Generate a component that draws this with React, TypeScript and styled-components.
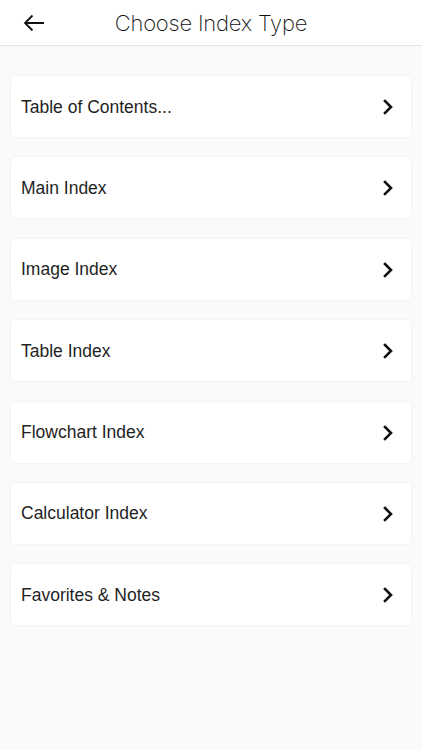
import React from "react";
import styled, { createGlobalStyle } from "styled-components";

const GlobalStyle = createGlobalStyle`
  html, body {
    margin: 0;
    padding: 0;
    background: #f9fafc;
  }
  body {
    font-family: "Liberation Sans", Arial, sans-serif;
  }
  * {
    box-sizing: border-box;
  }
`;

const Page = styled.div`
  width: 422px;
  min-height: 750px;
  background: #f9fafc;
`;

const Header = styled.header`
  position: relative;
  height: 46px;
  background: #ffffff;
  border-bottom: 1px solid #e2e3e6;
  display: flex;
  align-items: center;
  justify-content: center;
`;

const BackButton = styled.button`
  position: absolute;
  left: 20px;
  top: 11px;
  width: 28px;
  height: 24px;
  padding: 0;
  border: none;
  background: none;
  display: flex;
  align-items: center;
  justify-content: center;
`;

const Title = styled.h1`
  margin: 0;
  font-family: "Inter", "Liberation Sans", sans-serif;
  font-weight: 200;
  font-size: 22px;
  color: #111111;
  letter-spacing: -0.2px;
`;

const List = styled.div`
  display: flex;
  flex-direction: column;
  gap: 20.4px;
  padding: 30px 11px;
`;

const Card = styled.div`
  height: 61px;
  background: #ffffff;
  border-radius: 4px;
  box-shadow: 0 0 3px rgba(0, 0, 0, 0.06);
  display: flex;
  align-items: center;
  justify-content: space-between;
  padding: 1px 18px 0 10px;
`;

const Label = styled.span`
  font-size: 17.5px;
  color: #1f1f1f;
`;

const items = [
  "Table of Contents...",
  "Main Index",
  "Image Index",
  "Table Index",
  "Flowchart Index",
  "Calculator Index",
  "Favorites & Notes",
];

const Chevron = () => (
  <svg width="10" height="16" viewBox="0 0 10 16">
    <polyline
      points="2,2 8,8 2,14"
      fill="none"
      stroke="#111"
      strokeWidth="2.6"
      strokeLinecap="square"
      strokeLinejoin="miter"
    />
  </svg>
);

const App = () => (
  <>
    <GlobalStyle />
    <Page>
      <Header>
        <BackButton>
          <svg width="22" height="18" viewBox="0 0 22 18">
            <path
              d="M21 9H2M9.5 1.5L2 9l7.5 7.5"
              fill="none"
              stroke="#111"
              strokeWidth="1.8"
            />
          </svg>
        </BackButton>
        <Title>Choose Index Type</Title>
      </Header>
      <List>
        {items.map((item) => (
          <Card key={item}>
            <Label>{item}</Label>
            <Chevron />
          </Card>
        ))}
      </List>
    </Page>
  </>
);

export default App;
